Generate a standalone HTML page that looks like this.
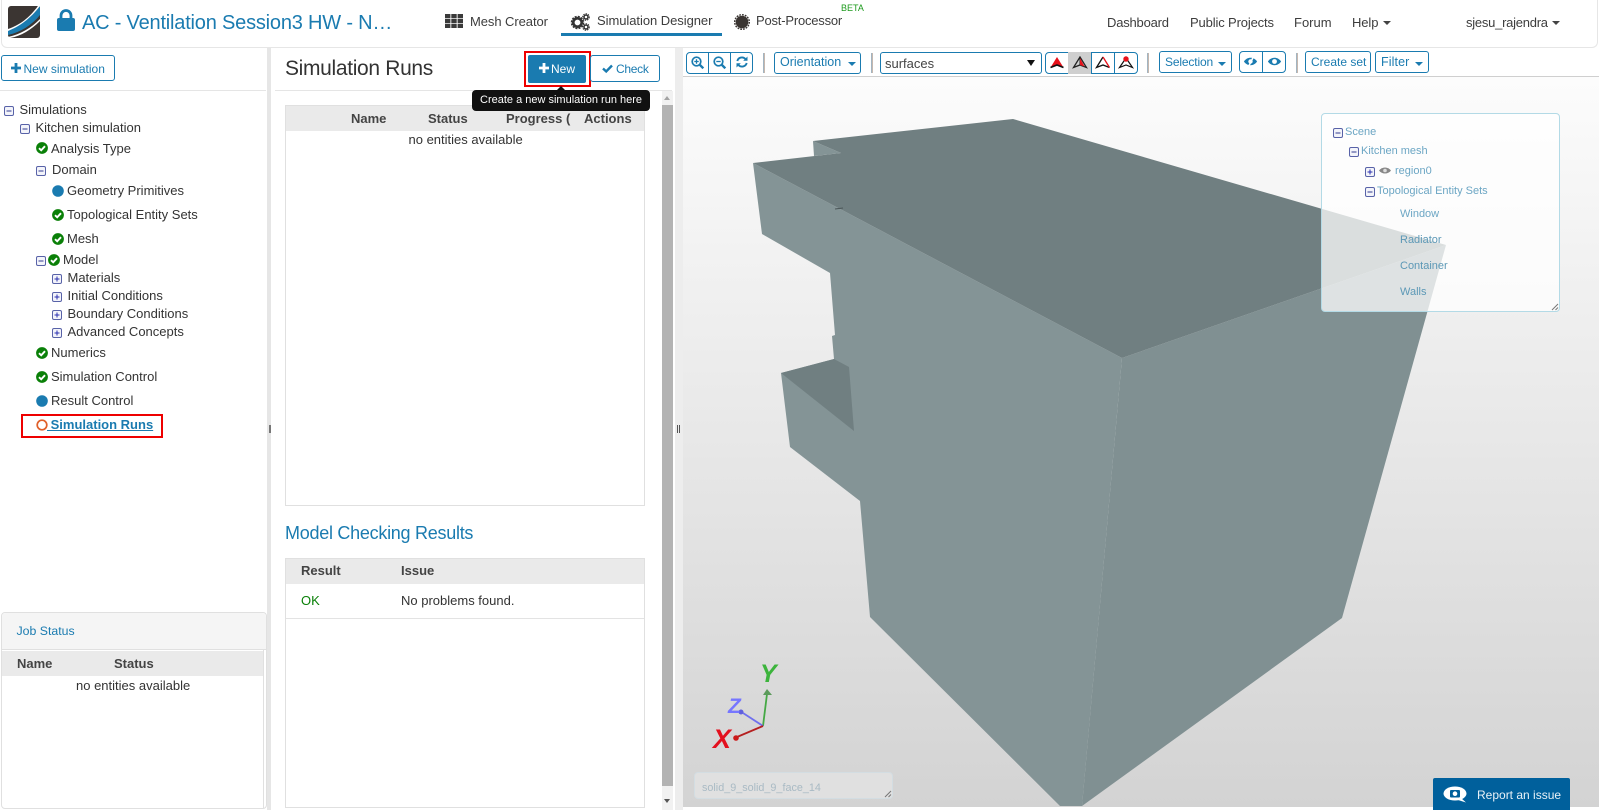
<!DOCTYPE html>
<html lang="en">
<head>
<meta charset="utf-8">
<title>Simulation Designer</title>
<style>
html,body{margin:0;padding:0;width:1599px;height:810px;overflow:hidden;background:#fff;font-family:"Liberation Sans",Arial,sans-serif;color:#333}
*{box-sizing:border-box}
.a{position:absolute}
.t{position:absolute;white-space:nowrap;line-height:20px;font-size:13px}
.b{color:#1a7bb0}
.btn{position:absolute;border:1px solid #1a7bb0;border-radius:3px;background:#fff;color:#1a7bb0;height:22px}
.th{font-weight:bold;color:#444}
.tree{color:#333}
svg.i{position:absolute;overflow:visible}
.ov{color:#6ca6c4;font-size:11px}
.sep{position:absolute;width:2px;height:20px;top:53px;background:linear-gradient(90deg,#8fb4cc,#d9b9a5)}
</style>
</head>
<body>
<svg width="0" height="0" style="position:absolute">
  <symbol id="ok" viewBox="0 0 12 12"><circle cx="6" cy="6" r="5.9" fill="#0a8008"/><path d="M3 6.200L5.200 8.300L9 4.200" fill="none" stroke="#fff" stroke-width="1.900"/></symbol>
  <symbol id="min" viewBox="0 0 10 10"><rect x=".5" y=".5" width="9" height="9" rx="1.500" fill="#f3f4fa" stroke="#5862a8"/><path d="M2.500 5H7.500" stroke="#333c90" stroke-width="1"/></symbol>
  <symbol id="plu" viewBox="0 0 10 10"><rect x=".5" y=".5" width="9" height="9" rx="1.500" fill="#f3f4fa" stroke="#5862a8"/><path d="M2.500 5H7.500M5 2.500V7.500" stroke="#2a2fb0" stroke-width="1"/></symbol>
  <symbol id="tet" viewBox="0 0 16 14"><path d="M8 1L1.500 11.500L8 9L14.500 11.500Z" fill="none" stroke="#222" stroke-width="1.300"/><path d="M8 1L8 9" stroke="#222"/></symbol>
</svg>

<!-- HEADER -->
<div class="a" style="left:1px;top:-4px;width:1597px;height:52px;border:1px solid #e6e6e6;border-top:0;border-radius:0 0 6px 6px;background:#fff"></div>
<svg class="i" style="left:8px;top:6px" width="32" height="32" viewBox="0 0 32 32">
  <rect width="32" height="32" rx="3" fill="#3b3532"/>
  <path d="M0 24C12 20 22 13 32 0V9C24 19 13 26 0 29Z" fill="#1a7bb0"/>
  <path d="M0 23C12 19 21 12 30 0H32C22 13 12 20 0 25Z" fill="#fff"/>
  <path d="M0 31C13 28 23 22 32 13V15C23 24 13 30 2 32H0Z" fill="#fff"/>
</svg>
<svg class="i" style="left:57px;top:9px" width="18" height="22" viewBox="0 0 18 22">
  <path d="M4 10V6.500a5 5 0 0 1 10 0V10" fill="none" stroke="#1a7bb0" stroke-width="2.800"/>
  <rect x="0" y="9" width="18" height="13" rx="2" fill="#1a7bb0"/>
</svg>
<div class="t b" style="left:82px;top:13px;font-size:20px;letter-spacing:-.2px">AC - Ventilation Session3 HW - N…</div>

<svg class="i" style="left:445px;top:14px" width="18" height="14" fill="#3a3a3a">
  <rect width="5.400" height="4.200"/><rect x="6.300" width="5.400" height="4.200"/><rect x="12.600" width="5.400" height="4.200"/>
  <rect y="4.900" width="5.400" height="4.200"/><rect x="6.300" y="4.900" width="5.400" height="4.200"/><rect x="12.600" y="4.900" width="5.400" height="4.200"/>
  <rect y="9.800" width="5.400" height="4.200"/><rect x="6.300" y="9.800" width="5.400" height="4.200"/><rect x="12.600" y="9.800" width="5.400" height="4.200"/>
</svg>
<div class="t" style="left:470px;top:12px;letter-spacing:-.07px;color:#3d3d3d">Mesh Creator</div>
<svg class="i" style="left:571px;top:13px" width="19" height="17" viewBox="0 0 19 17">
  <circle cx="6.500" cy="9.500" r="4.200" fill="none" stroke="#333" stroke-width="2.600"/>
  <circle cx="6.500" cy="9.500" r="6" fill="none" stroke="#333" stroke-width="1.500" stroke-dasharray="2 1.150"/>
  <circle cx="15" cy="4" r="2" fill="none" stroke="#333" stroke-width="1.500"/>
  <circle cx="15" cy="4" r="3.300" fill="none" stroke="#333" stroke-width="1" stroke-dasharray="1.500 1"/>
  <circle cx="15" cy="14" r="2" fill="none" stroke="#333" stroke-width="1.500"/>
  <circle cx="15" cy="14" r="3.300" fill="none" stroke="#333" stroke-width="1" stroke-dasharray="1.500 1"/>
</svg>
<div class="t" style="left:597px;top:11px;letter-spacing:-.05px;color:#3d3d3d">Simulation Designer</div>
<div class="a" style="left:561px;top:33px;width:161px;height:3px;background:#1a7bb0"></div>
<svg class="i" style="left:734px;top:14px" width="16" height="16" viewBox="0 0 16 16">
  <circle cx="8" cy="8" r="6.300" fill="#3a3532"/>
  <circle cx="8" cy="8" r="7.300" fill="none" stroke="#3a3532" stroke-width="1.400" stroke-dasharray="1.800 1.050"/>
</svg>
<div class="t" style="left:756px;top:11px;letter-spacing:-.2px;color:#3d3d3d">Post-Processor</div>
<div class="t" style="left:841px;top:-2px;font-size:9px;color:#1d9a1d">BETA</div>

<div class="t" style="left:1107px;top:13px;letter-spacing:-.2px;color:#3d3d3d">Dashboard</div>
<div class="t" style="left:1190px;top:13px;letter-spacing:-.14px;color:#3d3d3d">Public Projects</div>
<div class="t" style="left:1294px;top:13px;color:#3d3d3d">Forum</div>
<div class="t" style="left:1352px;top:13px;letter-spacing:-.1px;color:#3d3d3d">Help</div>
<div class="a" style="left:1383px;top:21px;border:4px solid transparent;border-top:4.500px solid #444;border-bottom:0"></div>
<div class="t" style="left:1466px;top:13px;letter-spacing:-.25px;color:#3d3d3d">sjesu_rajendra</div>
<div class="a" style="left:1552px;top:21px;border:4px solid transparent;border-top:4.500px solid #444;border-bottom:0"></div>

<!-- LEFT SIDEBAR -->
<div class="btn" style="left:1px;top:55px;width:114px;height:26px"></div>
<svg class="i" style="left:11px;top:63px" width="10" height="10"><path d="M5 0V10M0 5H10" stroke="#1a7bb0" stroke-width="2.800"/></svg>
<div class="t b" style="left:23.500px;top:59px;font-size:12px">New simulation</div>
<div class="a" style="left:0;top:90px;width:266px;height:1px;background:#e5e5e5"></div>

<svg class="i" style="left:4px;top:105.500px" width="10" height="10"><use href="#min"/></svg>
<div class="t tree" style="left:19.500px;top:100px">Simulations</div>
<svg class="i" style="left:20px;top:123.500px" width="10" height="10"><use href="#min"/></svg>
<div class="t tree" style="left:35.500px;top:118px">Kitchen simulation</div>
<svg class="i" style="left:36px;top:142px" width="12" height="12"><use href="#ok"/></svg>
<div class="t tree" style="left:51px;top:139px">Analysis Type</div>
<svg class="i" style="left:36px;top:165.500px" width="10" height="10"><use href="#min"/></svg>
<div class="t tree" style="left:52px;top:160px">Domain</div>
<svg class="i" style="left:52px;top:184.500px" width="12" height="12"><circle cx="6" cy="6" r="5.800" fill="#1a7bb0"/></svg>
<div class="t tree" style="left:67px;top:181px">Geometry Primitives</div>
<svg class="i" style="left:52px;top:208.500px" width="12" height="12"><use href="#ok"/></svg>
<div class="t tree" style="left:67px;top:205px">Topological Entity Sets</div>
<svg class="i" style="left:52px;top:232.500px" width="12" height="12"><use href="#ok"/></svg>
<div class="t tree" style="left:67px;top:229px">Mesh</div>
<svg class="i" style="left:36px;top:255.500px" width="10" height="10"><use href="#min"/></svg>
<svg class="i" style="left:48px;top:253.500px" width="12" height="12"><use href="#ok"/></svg>
<div class="t tree" style="left:63px;top:250px">Model</div>
<svg class="i" style="left:52px;top:273.500px" width="10" height="10"><use href="#plu"/></svg>
<div class="t tree" style="left:67.500px;top:268px">Materials</div>
<svg class="i" style="left:52px;top:291.500px" width="10" height="10"><use href="#plu"/></svg>
<div class="t tree" style="left:67.500px;top:286px">Initial Conditions</div>
<svg class="i" style="left:52px;top:309.500px" width="10" height="10"><use href="#plu"/></svg>
<div class="t tree" style="left:67.500px;top:304px">Boundary Conditions</div>
<svg class="i" style="left:52px;top:327.500px" width="10" height="10"><use href="#plu"/></svg>
<div class="t tree" style="left:67.500px;top:322px">Advanced Concepts</div>
<svg class="i" style="left:36px;top:346.500px" width="12" height="12"><use href="#ok"/></svg>
<div class="t tree" style="left:51px;top:343px">Numerics</div>
<svg class="i" style="left:36px;top:370.500px" width="12" height="12"><use href="#ok"/></svg>
<div class="t tree" style="left:51px;top:367px">Simulation Control</div>
<svg class="i" style="left:36px;top:394.500px" width="12" height="12"><circle cx="6" cy="6" r="5.800" fill="#1a7bb0"/></svg>
<div class="t tree" style="left:51px;top:391px">Result Control</div>
<svg class="i" style="left:36px;top:418.500px" width="12" height="12"><circle cx="6" cy="6" r="4.800" fill="none" stroke="#e0602a" stroke-width="1.700"/></svg>
<div class="t" style="left:47px;top:415px;font-weight:bold;color:#1a7bb0;text-decoration:underline;white-space:pre"> Simulation Runs</div>
<div class="a" style="left:21px;top:414px;width:142px;height:24px;border:2px solid #ee0000"></div>

<!-- JOB STATUS -->
<div class="a" style="left:1px;top:612px;width:266px;height:197px;border:1px solid #e0e0e0;border-radius:4px;background:#fff"></div>
<div class="a" style="left:2px;top:613px;width:264px;height:37px;background:#f5f5f5;border-bottom:1px solid #e0e0e0;border-radius:4px 4px 0 0"></div>
<div class="t" style="left:16.500px;top:621px;font-size:12.300px;color:#1a7bb0">Job Status</div>
<div class="a" style="left:2px;top:651px;width:262px;height:25px;background:#eaeaea"></div>
<div class="a" style="left:263px;top:650px;width:1px;height:158px;background:#e0e0e0"></div>
<div class="t th" style="left:17px;top:654px">Name</div>
<div class="t th" style="left:114px;top:654px">Status</div>
<div class="t" style="left:76px;top:676px">no entities available</div>

<!-- SPLITTERS -->
<div class="a" style="left:267px;top:48px;width:4px;height:762px;background:#e6e6e6"></div>
<div class="a" style="left:269px;top:425px;width:2px;height:8px;border-left:1px solid #777;border-right:1px solid #777"></div>
<div class="a" style="left:675px;top:48px;width:8px;height:762px;background:#ededed"></div>
<div class="a" style="left:677px;top:425px;width:3px;height:8px;border-left:1px solid #555;border-right:1px solid #555"></div>

<!-- CENTER -->
<div class="t" style="left:285px;top:59px;font-size:21px;letter-spacing:-.33px;color:#333">Simulation Runs</div>
<div class="a" style="left:275px;top:90px;width:397px;height:1px;background:#e5e5e5"></div>
<div class="a" style="left:528px;top:55px;width:58px;height:28px;background:#1a7bb0;border-radius:2px"></div>
<svg class="i" style="left:539px;top:63px" width="10" height="10"><path d="M5 0V10M0 5H10" stroke="#fff" stroke-width="2.800"/></svg>
<div class="t" style="left:551px;top:59px;font-size:12px;color:#fff">New</div>
<div class="a" style="left:524px;top:51px;width:67px;height:36px;border:2px solid #ee0000"></div>
<div class="btn" style="left:590px;top:55px;width:70px;height:27px"></div>
<svg class="i" style="left:602px;top:64px" width="11" height="9"><path d="M1 4.500L4.200 7.500L10 1.500" fill="none" stroke="#1a7bb0" stroke-width="2.400"/></svg>
<div class="t b" style="left:616px;top:59px;font-size:12px;letter-spacing:-.3px">Check</div>

<!-- sim runs table -->
<div class="a" style="left:285px;top:105px;width:360px;height:401px;border:1px solid #e0e0e0;background:#fff"></div>
<div class="a" style="left:286px;top:106px;width:358px;height:25px;background:#eaeaea"></div>
<div class="t th" style="left:351px;top:109px">Name</div>
<div class="t th" style="left:428px;top:109px">Status</div>
<div class="t th" style="left:506px;top:109px">Progress (</div>
<div class="t th" style="left:584px;top:109px">Actions</div>
<div class="t" style="left:408.500px;top:130px">no entities available</div>

<!-- tooltip -->
<div class="a" style="left:472px;top:90px;width:178px;height:21px;background:#111;border-radius:4px"></div>
<div class="a" style="left:557px;top:86px;border:4.500px solid transparent;border-bottom:4.500px solid #111;border-top:0"></div>
<div class="t" style="left:480px;top:90px;font-size:11px;color:#fff">Create a new simulation run here</div>

<!-- scrollbar -->
<div class="a" style="left:662px;top:91px;width:11px;height:719px;background:#f1f1f1"></div>
<div class="a" style="left:664px;top:96px;border:3.500px solid transparent;border-bottom:4px solid #a3a3a3;border-top:0"></div>
<div class="a" style="left:662px;top:105px;width:11px;height:681px;background:#b3b3b3"></div>
<div class="a" style="left:664px;top:799px;border:3.500px solid transparent;border-top:4px solid #555;border-bottom:0"></div>

<!-- model checking -->
<div class="t b" style="left:285px;top:523px;font-size:18px;letter-spacing:-.27px">Model Checking Results</div>
<div class="a" style="left:285px;top:558px;width:360px;height:250px;border:1px solid #e0e0e0;background:#fff"></div>
<div class="a" style="left:286px;top:559px;width:358px;height:25px;background:#eaeaea"></div>
<div class="t th" style="left:301px;top:561px">Result</div>
<div class="t th" style="left:401px;top:561px">Issue</div>
<div class="t" style="left:301px;top:591px;color:#0a8008">OK</div>
<div class="t" style="left:401px;top:591px">No problems found.</div>
<div class="a" style="left:286px;top:618px;width:358px;height:1px;background:#e3e3e3"></div>

<!-- TOOLBAR -->
<div class="btn" style="left:686px;top:52px;width:67px;height:22px;border-radius:4px"></div>
<div class="a" style="left:708px;top:52px;width:1px;height:22px;background:#1a7bb0"></div>
<div class="a" style="left:730px;top:52px;width:1px;height:22px;background:#1a7bb0"></div>
<svg class="i" style="left:691px;top:56px" width="13" height="13" viewBox="0 0 13 13" fill="none" stroke="#1a7bb0" stroke-width="1.700"><circle cx="5.500" cy="5.500" r="4.300"/><path d="M8.800 8.800L12.300 12.300" stroke-width="2.400"/><path d="M3.300 5.500H7.700M5.500 3.300V7.700" stroke-width="1.300"/></svg>
<svg class="i" style="left:713px;top:56px" width="13" height="13" viewBox="0 0 13 13" fill="none" stroke="#1a7bb0" stroke-width="1.700"><circle cx="5.500" cy="5.500" r="4.300"/><path d="M8.800 8.800L12.300 12.300" stroke-width="2.400"/><path d="M3.300 5.500H7.700" stroke-width="1.300"/></svg>
<svg class="i" style="left:736px;top:56px" width="12" height="12" viewBox="0 0 12 12" fill="none" stroke="#1a7bb0" stroke-width="1.900"><path d="M1.300 5A4.800 4.800 0 0 1 9.500 3"/><path d="M10.700 7A4.800 4.800 0 0 1 2.500 9"/><path d="M11.500 .5V4.800H7.200Z" fill="#1a7bb0" stroke="none"/><path d="M.5 11.500V7.200H4.800Z" fill="#1a7bb0" stroke="none"/></svg>
<div class="sep" style="left:763px"></div>
<div class="btn" style="left:774px;top:52px;width:87px;height:22px"></div>
<div class="t b" style="left:780px;top:52px;font-size:12.500px">Orientation</div>
<div class="a" style="left:848px;top:62px;border:4px solid transparent;border-top:4.500px solid #1a7bb0;border-bottom:0"></div>
<div class="sep" style="left:871px"></div>
<div class="a" style="left:880px;top:52px;width:162px;height:22px;border:1px solid #1a7bb0;border-radius:3px;background:#fff"></div>
<div class="t" style="left:885px;top:54px;color:#444">surfaces</div>
<div class="a" style="left:1027px;top:60px;border:4.500px solid transparent;border-top:6px solid #111;border-bottom:0"></div>
<div class="btn" style="left:1045px;top:52px;width:93px;height:22px;border-radius:4px"></div>
<div class="a" style="left:1068px;top:52px;width:24px;height:22px;background:#cfcfcf;border-right:1px solid #1a7bb0"></div>
<div class="a" style="left:1114px;top:52px;width:1px;height:22px;background:#1a7bb0"></div>
<svg class="i" style="left:1049px;top:56px" width="16" height="14"><path d="M8 1L1.500 11.500L8 9L14.500 11.500Z" fill="#e8111a"/><path d="M1.500 11.500L8 9L14.500 11.500" fill="none" stroke="#111" stroke-width="1.600"/></svg>
<svg class="i" style="left:1072px;top:56px" width="16" height="14"><use href="#tet"/><path d="M8 2L8 9L12.500 10.500Z" fill="#e8111a"/></svg>
<svg class="i" style="left:1095px;top:56px" width="16" height="14"><path d="M8 1L1.500 11.500L8 9L14.500 11.500" fill="none" stroke="#111" stroke-width="1.300"/><path d="M8 1L14.500 11.500" stroke="#e8111a" stroke-width="1.300"/></svg>
<svg class="i" style="left:1118px;top:56px" width="16" height="14"><path d="M8 2L1.500 11.500L8 9L14.500 11.500Z" fill="none" stroke="#111" stroke-width="1.200"/><circle cx="8" cy="3" r="2.700" fill="#e8111a"/></svg>

<div class="a sep" style="left:1147px"></div>
<div class="btn" style="left:1159px;top:51px;width:73px;height:22px"></div>
<div class="t b" style="left:1165px;top:52px;font-size:12px;letter-spacing:-.15px">Selection</div>
<div class="a" style="left:1218px;top:62px;border:4px solid transparent;border-top:4.500px solid #1a7bb0;border-bottom:0"></div>
<div class="btn" style="left:1239px;top:51px;width:47px;height:22px;border-radius:4px"></div>
<div class="a" style="left:1262px;top:51px;width:1px;height:22px;background:#1a7bb0"></div>
<svg class="i" style="left:1243px;top:56px" width="15" height="11" viewBox="0 0 13 10"><path d="M.5 5C3.500 .5 9.500 .5 12.500 5C9.500 9.500 3.500 9.500 .5 5Z" fill="#1a7bb0"/><circle cx="6.500" cy="5" r="2" fill="#fff"/><path d="M9.500 0L4.500 10" stroke="#fff" stroke-width="1.400"/></svg>
<svg class="i" style="left:1267px;top:56px" width="15" height="11" viewBox="0 0 13 10"><path d="M.5 5C3.500 .5 9.500 .5 12.500 5C9.500 9.500 3.500 9.500 .5 5Z" fill="#1a7bb0"/><circle cx="6.500" cy="5" r="2.200" fill="#fff"/></svg>
<div class="sep" style="left:1296px"></div>
<div class="btn" style="left:1305px;top:51px;width:66px;height:22px"></div>
<div class="t b" style="left:1311px;top:52px;font-size:12px">Create set</div>
<div class="btn" style="left:1375px;top:51px;width:54px;height:22px"></div>
<div class="t b" style="left:1381px;top:52px;font-size:12.500px;letter-spacing:.1px">Filter</div>
<div class="a" style="left:1415px;top:62px;border:4px solid transparent;border-top:4.500px solid #1a7bb0;border-bottom:0"></div>

<!-- VIEWER -->
<div class="a" style="left:683px;top:76px;width:916px;height:731px;background:linear-gradient(#fcfcfc,#d3d3d3);border-top:1px solid #cfcfcf"></div>
<svg class="i" style="left:0;top:0" width="1599" height="810">
  <polygon points="753,163 1122,358 1082,806 1060,806 870,617 860,501 790,447 781,373 834,359 832,336 835,335 830,273 762,234" fill="#849496"/>
  <polygon points="1122,358 1446,245 1342,618 1082,806" fill="#809092"/>
  <polygon points="813,141 841,153 814,156" fill="#849496"/>
  <polygon points="753,163 841,153 813,141 1013,119 1446,245 1122,358" fill="#707f81"/>
  <polygon points="781,373 834,359 849,367 854,431" fill="#707f81"/>
  <path d="M835,209L843,208" stroke="#4a5557" stroke-width="1"/>
  <!-- axes -->
  <path d="M763,726L767,694" stroke="#45a845" stroke-width="1.800"/>
  <polygon points="767,689 763,695 772,695" fill="#5b9a5b"/>
  <path d="M763,726L743,713" stroke="#7070ee" stroke-width="1.800"/>
  <circle cx="741" cy="712" r="2.500" fill="#6060dd"/>
  <path d="M763,726L737,737" stroke="#b52020" stroke-width="1.800"/>
  <circle cx="736" cy="738" r="2.800" fill="#cc1a1a"/>
  <text x="760" y="682" font-family="Liberation Sans" font-weight="bold" font-style="italic" font-size="25" fill="#3cb43c">Y</text>
  <text x="728" y="713" font-family="Liberation Sans" font-weight="bold" font-style="italic" font-size="21" fill="#7676ff">Z</text>
  <text x="713" y="748" font-family="Liberation Sans" font-weight="bold" font-style="italic" font-size="27" fill="#e3101e">X</text>
</svg>

<!-- scene tree overlay -->
<div class="a" style="left:1321px;top:113px;width:239px;height:199px;background:rgba(255,255,255,.74);border:1px solid #b3dae6;border-radius:4px"></div>
<svg class="i" style="left:1333px;top:127.500px" width="10" height="10"><use href="#min"/></svg>
<div class="t ov" style="left:1345px;top:122px">Scene</div>
<svg class="i" style="left:1349px;top:146.500px" width="10" height="10"><use href="#min"/></svg>
<div class="t ov" style="left:1361px;top:141px">Kitchen mesh</div>
<svg class="i" style="left:1365px;top:166.500px" width="10" height="10"><use href="#plu"/></svg>
<svg class="i" style="left:1379px;top:166px" width="12" height="9" viewBox="0 0 12 9"><path d="M0 4.500C3 .5 9 .5 12 4.500C9 8.500 3 8.500 0 4.500Z" fill="#888"/><circle cx="6" cy="4.500" r="1.800" fill="#ddd"/></svg>
<div class="t ov" style="left:1395px;top:161px">region0</div>
<svg class="i" style="left:1365px;top:186.500px" width="10" height="10"><use href="#min"/></svg>
<div class="t ov" style="left:1377px;top:181px">Topological Entity Sets</div>
<div class="t ov" style="left:1400px;top:204px">Window</div>
<div class="t ov" style="left:1400px;top:230px;color:#5c98b6">Radiator</div>
<div class="t ov" style="left:1400px;top:256px;color:#5c98b6">Container</div>
<div class="t ov" style="left:1400px;top:282px;color:#5c98b6">Walls</div>
<svg class="i" style="left:1551px;top:303px" width="8" height="8"><path d="M1 7L7 1M4.500 7L7 4.500" stroke="#777"/></svg>

<!-- name box -->
<div class="a" style="left:694px;top:772px;width:199px;height:27px;background:rgba(255,255,255,.28);border:1px solid #d3dde2;border-radius:4px"></div>
<div class="t" style="left:702px;top:777.500px;font-size:10.800px;color:#a9bac4">solid_9_solid_9_face_14</div>
<svg class="i" style="left:884px;top:790px" width="8" height="8"><path d="M1 7L7 1M4.500 7L7 4.500" stroke="#777"/></svg>

<!-- report -->
<div class="a" style="left:1433px;top:778px;width:137px;height:32px;background:#00609c;border-radius:2px 2px 0 0"></div>
<svg class="i" style="left:1443px;top:786px" width="24" height="17" viewBox="0 0 24 17"><ellipse cx="12" cy="7.500" rx="11.500" ry="7" fill="#fff"/><path d="M18 12L23 16.500L15 14Z" fill="#fff"/><rect x="7" y="4" width="10" height="7.500" rx="1" fill="#00609c"/><circle cx="12" cy="7.700" r="2.300" fill="#fff"/></svg>
<div class="t" style="left:1477px;top:785px;font-size:12px;color:#e8f1f7">Report an issue</div>
</body>
</html>
